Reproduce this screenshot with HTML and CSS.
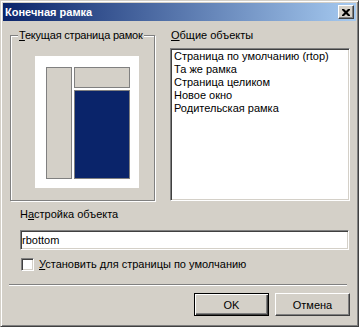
FILE: index.html
```html
<!DOCTYPE html>
<html lang="ru">
<head>
  <meta charset="UTF-8" />
  <title>Конечная рамка</title>
  <link rel="stylesheet" href="styles.css">
</head>
<body>
  <div class="window">
    <div class="titlebar">
      <span class="title">Конечная рамка</span>
      <button class="close" type="button" aria-label="Закрыть">
        <svg width="8" height="7" viewBox="0 0 8 7"><path d="M0 0h2l2 2 2-2h2v1L5.5 3.5 8 6v1H6L4 5 2 7H0V6l2.5-2.5L0 1z" fill="#000"/></svg>
      </button>
    </div>
    <div class="body">
      <div class="top">
        <fieldset class="group">
          <legend><u>Т</u>екущая страница рамок</legend>
          <div class="preview">
            <div class="pane side"></div>
            <div class="pane"></div>
            <div class="pane current"></div>
          </div>
        </fieldset>
        <div class="targets">
          <div class="label"><u>О</u>бщие объекты</div>
          <ul class="listbox">
            <li>Страница по умолчанию (rtop)</li>
            <li>Та же рамка</li>
            <li>Страница целиком</li>
            <li>Новое окно</li>
            <li>Родительская рамка</li>
          </ul>
        </div>
      </div>
      <div class="label setting">Н<u>а</u>стройка объекта</div>
      <input class="field" type="text" value="rbottom" />
      <label class="check"><span class="box"></span><span><u>У</u>становить для страницы по умолчанию</span></label>
      <div class="sep"></div>
      <div class="buttons">
        <button class="btn default" type="button">OK</button>
        <button class="btn" type="button">Отмена</button>
      </div>
    </div>
  </div>
</body>
</html>
```
FILE: styles.css
```css
body {
  margin: 0;
  font-family: "Liberation Sans", Arial, sans-serif;
  font-size: 11px;
  color: #000;
}
.window {
  width: 359px;
  height: 327px;
  box-sizing: border-box;
  background: #d4d0c8;
  border: 1px solid;
  border-color: #d4d0c8 #404040 #404040 #d4d0c8;
  box-shadow: inset 1px 1px #fff, inset -1px -1px #808080;
  padding: 2px;
}
.titlebar {
  height: 18px;
  display: flex;
  align-items: center;
  justify-content: space-between;
  padding: 0 2px 0 2px;
  background: linear-gradient(90deg, #0a246a, #a6caf0);
}
.title {
  color: #fff;
  font-weight: bold;
}
.close {
  width: 16px;
  height: 14px;
  padding: 0;
  display: flex;
  align-items: center;
  justify-content: center;
  background: #d4d0c8;
  border: 1px solid;
  border-color: #fff #404040 #404040 #fff;
  box-shadow: inset -1px -1px #808080;
}
.body {
  padding: 8px 6px 0 7px;
}
.top {
  display: grid;
  grid-template-columns: 145px 180px;
  column-gap: 15px;
}
.group {
  margin: 0;
  padding: 0;
  min-width: 0;
  height: 172px;
  box-sizing: border-box;
  border: 1px solid #808080;
  box-shadow: inset 1px 1px #fff, 1px 1px #fff;
}
.group legend {
  margin-left: 7px;
  padding: 0 1px;
  line-height: 13px;
  letter-spacing: -0.2px;
  background: #d4d0c8;
}
.preview {
  margin: 14px 0 0 24px;
  width: 104px;
  height: 132px;
  box-sizing: border-box;
  padding: 11px 0 0 11px;
  background: #fff;
  display: grid;
  grid-template-columns: 26px 56px;
  grid-template-rows: 21px 89px;
  gap: 2px;
}
.pane {
  border: 1px solid #808080;
  background: #d4d0c8;
}
.pane.side {
  grid-row: 1 / 3;
}
.pane.current {
  background: #0a246a;
}
.label {
  line-height: 13px;
  padding-left: 1px;
}
.listbox {
  list-style: none;
  margin: 6px 0 0;
  padding: 1px 0 0 2px;
  height: 153px;
  box-sizing: border-box;
  background: #fff;
  border: 1px solid;
  border-color: #808080 #fff #fff #808080;
  box-shadow: inset 1px 1px #404040, inset -1px -1px #d4d0c8;
}
.listbox li {
  line-height: 13px;
  padding-left: 1px;
}
.setting {
  margin-top: 7px;
  padding-left: 10px;
}
.field {
  display: block;
  margin: 9px 0 0 10px;
  width: 329px;
  height: 20px;
  box-sizing: border-box;
  padding: 0 1px;
  font: inherit;
  background: #fff;
  border: 1px solid;
  border-color: #808080 #fff #fff #808080;
  box-shadow: inset 1px 1px #404040, inset -1px -1px #d4d0c8;
  outline: none;
}
.check {
  display: flex;
  align-items: center;
  gap: 5px;
  margin: 8px 0 0 11px;
  line-height: 13px;
}
.box {
  width: 13px;
  height: 13px;
  box-sizing: border-box;
  background: #fff;
  border: 1px solid;
  border-color: #808080 #fff #fff #808080;
  box-shadow: inset 1px 1px #404040, inset -1px -1px #d4d0c8;
}
.sep {
  margin: 13px 0 0 -1px;
  width: 338px;
  border-top: 1px solid #808080;
  border-bottom: 1px solid #fff;
}
.buttons {
  display: flex;
  justify-content: flex-end;
  gap: 6px;
  margin-top: 7px;
}
.btn {
  width: 75px;
  height: 23px;
  padding: 0;
  font: inherit;
  color: #000;
  background: #d4d0c8;
  border: 1px solid;
  border-color: #fff #404040 #404040 #fff;
  box-shadow: inset -1px -1px #808080;
}
.btn.default {
  border: 1px solid #000;
  box-shadow: inset 1px 1px #fff, inset -1px -1px #404040, inset -2px -2px #808080;
}
```
